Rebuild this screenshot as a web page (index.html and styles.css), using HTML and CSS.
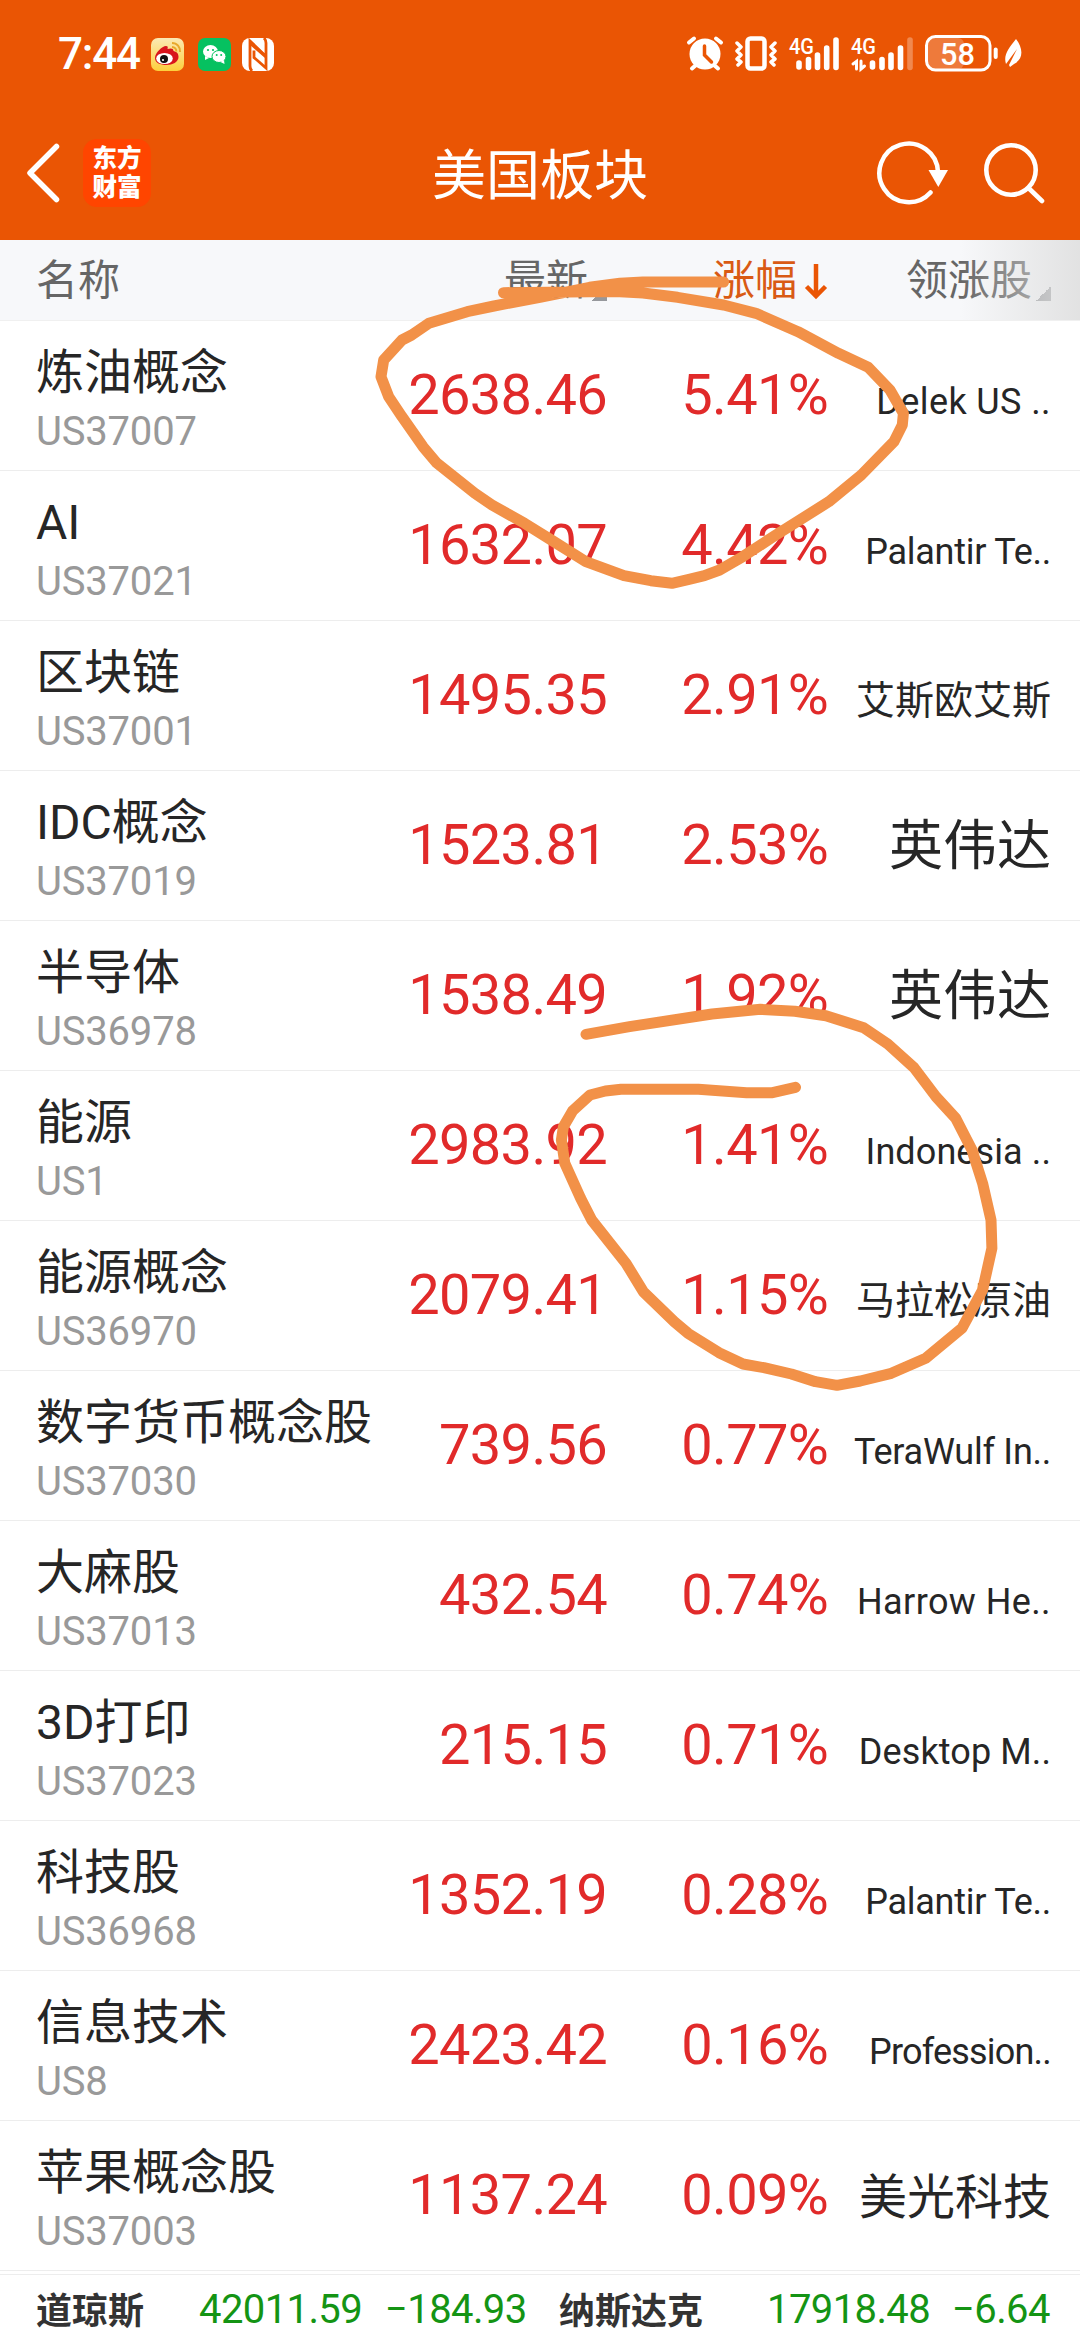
FILE: index.html
```
<!DOCTYPE html>
<html lang="zh-CN">
<head>
<meta charset="utf-8">
<title>美国板块</title>
<link rel="stylesheet" href="styles.css">
</head>
<body>
<div class="screen">
  <header class="top">
    <div class="status">
      <span class="clock">7:44</span>
      <svg class="ic-weibo" width="33" height="33" viewBox="0 0 33 33"><defs><linearGradient id="wb" x1="0" y1="0" x2="0" y2="1"><stop offset="0" stop-color="#fbe9b4"/><stop offset="1" stop-color="#fdcf3c"/></linearGradient></defs><rect width="33" height="33" rx="7" fill="url(#wb)"/><path d="M4 20c0-5 7-12 11-12 2 0 2 1 1.500 3 3-1 6-1 6 2 4 1 5 3 5 6 0 5-6 8-12 8S4 25 4 20z" fill="#d8141c"/><ellipse cx="13.500" cy="20.500" rx="8.300" ry="5.600" fill="#fff"/><circle cx="13" cy="21" r="4" fill="#111"/><circle cx="12" cy="22" r="1.100" fill="#fff"/><path d="M21 5c5 0 8.500 4 8 9M21 9c2.800 0 4.500 2 4.300 4.500" fill="none" stroke="#e8a82c" stroke-width="2"/></svg>
      <svg class="ic-wechat" width="33" height="33" viewBox="0 0 33 33"><rect width="33" height="33" rx="7" fill="#06c160"/><ellipse cx="12.500" cy="13.500" rx="7.500" ry="6.500" fill="#fff"/><path d="M7 18l0 4 4-2z" fill="#fff"/><ellipse cx="21" cy="18.500" rx="7" ry="6" fill="#fff" stroke="#06c160" stroke-width="1"/><path d="M26 22l0.500 4-4-2z" fill="#fff"/><g fill="#06c160"><circle cx="10" cy="12" r="1.100"/><circle cx="15" cy="12" r="1.100"/><circle cx="18.700" cy="17" r="1"/><circle cx="23.200" cy="17" r="1"/></g></svg>
      <svg class="ic-nfc" width="32" height="33" viewBox="0 0 32 33"><rect width="32" height="33" rx="8" fill="#fff"/><path d="M10 33Q8 31 8 28V3l14.500 14M22 0q2 2 2 5v25L12 19.500v-7" fill="none" stroke="#ea5504" stroke-width="2.800"/><path d="M8 2l15 14v4L8 7z" fill="#ea5504"/></svg>
      <svg class="ic-system" width="340" height="40" viewBox="684 34 340 40">
        <g fill="none" stroke="#fff" stroke-linecap="round">
          <circle cx="705" cy="54" r="15.500" fill="#fff" stroke="none"/>
          <path d="M689 42.500l5-4M721 42.500l-5-4M696 65l-4 3.500M714 65l4 3.500" stroke-width="4"/>
          <path d="M704.500 46v9l7 7" stroke="#ea5504" stroke-width="3.500"/>
          <rect x="747.500" y="38.500" width="17" height="30" rx="3" stroke-width="4.500"/>
          <path d="M737 43l4 4-4 4 4 4-4 4 4 3-3 3M775 43l-4 4 4 4-4 4 4 4-4 3 3 3" stroke-width="3.500" stroke-linejoin="round"/>
          <path d="M799 63v4M808.500 59.500V67.500M817.500 55V67.500M826.700 48V67.500M836 40V67.500M872.500 63v4M882 59.500V67.500M891 55V67.500M900.500 48V67.500" stroke-width="5.600"/>
          <path d="M910 40V67.500" stroke-width="5.600" opacity=".3"/>
          <path d="M853 64l3.500-2.500V69M861 61v8l3.500-3" stroke-width="3"/>
          <rect x="928" y="38" width="36" height="31" rx="6" fill="#fff" fill-opacity=".22" stroke="none"/>
          <rect x="926.500" y="36.500" width="63.500" height="33.500" rx="9" stroke-width="3"/>
          <path d="M995.700 49.500v7.500" stroke-width="4"/>
        </g>
        <path d="M1016 39c7 9 8 20-2 25l-4 3-1-2 8-16-11 15c-3-9 3-16 10-25z" fill="#fff"/>
        <g class="sys-text" fill="#fff"><text x="789" y="53.500" font-size="22" textLength="25" lengthAdjust="spacingAndGlyphs">4G</text><text x="851" y="53.500" font-size="22" textLength="25" lengthAdjust="spacingAndGlyphs">4G</text><text x="940" y="65" font-size="32" textLength="35" lengthAdjust="spacingAndGlyphs">58</text></g>
      </svg>
    </div>
    <div class="nav">
      <svg class="back" width="34" height="60" viewBox="0 0 34 60"><path d="M30.500 6L4 32.500 30.500 59" transform="translate(0 -2.500)" fill="none" stroke="#fff" stroke-width="5.500" stroke-linecap="round" stroke-linejoin="round"/></svg>
      <div class="logo"><span>东方</span><span>财富</span></div>
      <h1 class="title">美国板块</h1>
      <svg class="refresh" width="74" height="68" viewBox="875 138 74 68"><path d="M938 171A29.300 29.300 0 1 0 930.500 191.500" fill="none" stroke="#fff" stroke-width="4.500" stroke-linecap="round"/><path d="M928.500 169h19.500l-9.700 17z" fill="#fff"/></svg>
      <svg class="search" width="62" height="64" viewBox="983 140 62 64"><g fill="none" stroke="#fff" stroke-width="4.600" stroke-linecap="round"><circle cx="1011" cy="169" r="24.700"/><path d="M1029 187.500l13 12.500"/></g></svg>
    </div>
  </header>
  <div class="head">
    <span class="h-name">名称</span>
    <span class="h-cell">最新<i class="tri"></i></span>
    <span class="h-cell active">涨幅<svg class="arrow" width="24" height="38" viewBox="0 0 24 38"><path d="M12 2V34M2.500 24.500L12 34l9.500-9.500" fill="none" stroke="#ea5504" stroke-width="4.500"/></svg></span>
    <span class="h-cell">领涨股<i class="tri"></i></span>
  </div>
  <main class="list">
    <div class="row"><div class="name"><b>炼油概念</b><small>US37007</small></div><span class="num">2638.46</span><span class="num pct">5.41%</span><span class="lead wide">Delek US ..</span></div>
    <div class="row"><div class="name"><b>AI</b><small>US37021</small></div><span class="num">1632.07</span><span class="num pct">4.42%</span><span class="lead">Palantir Te..</span></div>
    <div class="row"><div class="name"><b>区块链</b><small>US37001</small></div><span class="num">1495.35</span><span class="num pct">2.91%</span><span class="lead zh5">艾斯欧艾斯</span></div>
    <div class="row"><div class="name"><b>IDC概念</b><small>US37019</small></div><span class="num">1523.81</span><span class="num pct">2.53%</span><span class="lead zh3">英伟达</span></div>
    <div class="row"><div class="name"><b>半导体</b><small>US36978</small></div><span class="num">1538.49</span><span class="num pct">1.92%</span><span class="lead zh3">英伟达</span></div>
    <div class="row"><div class="name"><b>能源</b><small>US1</small></div><span class="num">2983.92</span><span class="num pct">1.41%</span><span class="lead even">Indonesia ..</span></div>
    <div class="row"><div class="name"><b>能源概念</b><small>US36970</small></div><span class="num">2079.41</span><span class="num pct">1.15%</span><span class="lead zh5">马拉松原油</span></div>
    <div class="row"><div class="name"><b>数字货币概念股</b><small>US37030</small></div><span class="num">739.56</span><span class="num pct">0.77%</span><span class="lead">TeraWulf In..</span></div>
    <div class="row"><div class="name"><b>大麻股</b><small>US37013</small></div><span class="num">432.54</span><span class="num pct">0.74%</span><span class="lead wide">Harrow He..</span></div>
    <div class="row"><div class="name"><b>3D打印</b><small>US37023</small></div><span class="num">215.15</span><span class="num pct">0.71%</span><span class="lead even">Desktop M..</span></div>
    <div class="row"><div class="name"><b>科技股</b><small>US36968</small></div><span class="num">1352.19</span><span class="num pct">0.28%</span><span class="lead">Palantir Te..</span></div>
    <div class="row"><div class="name"><b>信息技术</b><small>US8</small></div><span class="num">2423.42</span><span class="num pct">0.16%</span><span class="lead tight">Profession..</span></div>
    <div class="row"><div class="name"><b>苹果概念股</b><small>US37003</small></div><span class="num">1137.24</span><span class="num pct">0.09%</span><span class="lead zh4">美光科技</span></div>
  </main>
  <footer class="ticker">
    <b class="t-name">道琼斯</b><span class="t-val">42011.59</span><span class="t-chg">−184.93</span>
    <b class="t-name second">纳斯达克</b><span class="t-val">17918.48</span><span class="t-chg">−6.64</span>
  </footer>
  <svg class="ink" width="1080" height="2340" viewBox="0 0 1080 2340">
    <polyline points="503.500,292.700 589.600,291.700 620,291.700 643,293 677.600,297.300 723.600,305 756,313.300 798,331.700 838.400,353.300 868.200,367.300 890,390 903.400,413.300 902.300,425 893.900,441.700 861.300,475 828.800,501.700 773.300,536.700 742.700,556.700 719.700,570 704.400,575.700 689,579.300 671.900,583.300 650.800,580.700 624,575.700 585.800,561.700 551.300,540 524.600,523.300 492,505 474.800,493.300 436.500,462.700 423,446.700 402,416.700 388.700,396.700 381,376.700 383.700,360 402,340 411.700,335 428.900,323.300 467.200,311.700 494,306 539.900,297.300 589.600,287.300 620,283.300 643,282 723.600,282"/>
    <polyline points="586,1034.300 629.500,1026.700 712,1014 760.400,1009.300 794.900,1011.300 825.900,1015.700 863.700,1027.700 887.800,1044 913.700,1067.300 936,1096.700 955.700,1118.300 972,1150 982.600,1183.300 991,1220 991.900,1248.300 982.600,1290 961.900,1328.300 925.700,1358.300 891.300,1373.300 860.300,1381 837,1385.300 815.500,1381.700 791.400,1374 763.900,1367.700 743,1364 719,1352.700 688,1333.300 674.300,1321.700 643.300,1291.700 626,1263.300 591.700,1220 580.600,1198.300 564.800,1163.300 561.400,1140 563.400,1126.700 572.700,1110.700 590,1095 605.400,1091 621,1089.300 698.400,1089.300 746.600,1092.700 772.500,1092.700 795.500,1087.300"/>
  </svg>
</div>
</body>
</html>
```
FILE: styles.css
```
* { box-sizing: border-box; }
body { margin: 0; background: #fff; font-family: Roboto, "Noto Sans CJK SC", sans-serif; color: #262626; }
.screen { position: relative; width: 1080px; height: 2340px; overflow: hidden; display: flex; flex-direction: column; }
.screen svg { display: block; flex: none; }

.top { height: 240px; background: #ea5504; color: #fff; }
.status { height: 106px; display: flex; align-items: center; padding: 2px 0 0 58px; }
.clock { width: 93px; font: 500 44px/1 Roboto, sans-serif; letter-spacing: -1.2px; }
.ic-wechat { margin-left: 14px; }
.ic-nfc { margin-left: 11px; }
.screen .ic-system { margin-left: 410px; overflow: visible; }
.sys-text { font-family: Roboto, sans-serif; font-weight: 500; }

.nav { height: 134px; display: flex; align-items: center; padding-left: 26px; }
.logo { width: 68px; height: 68px; margin-left: 23px; border-radius: 14px; background: #ff4500; display: flex; flex-direction: column; align-items: center; justify-content: center; padding-bottom: 4px; font: 900 24.5px/29px "Noto Sans CJK SC", sans-serif; }
.title { flex: none; width: 216px; margin: -2px 0 0 281px; font: 400 54px/80px "Noto Sans CJK SC", sans-serif; white-space: nowrap; }
.refresh { margin-left: 227px; }
.search { margin-left: 34px; }

.head, .row { display: grid; grid-template-columns: 370px 237px 221px 223px; }
.head { position: relative; height: 81px; background: #f7f8fa; border-bottom: 1px solid #f0f0f0; color: #666; font: 400 42px/74px "Noto Sans CJK SC", sans-serif; }
.head::after { content: ""; position: absolute; top: 0; right: 0; width: 120px; height: 80px; background: linear-gradient(90deg, rgba(222,222,222,0), rgba(222,222,222,.85)); }
.h-name { padding-left: 36px; }
.h-cell { display: flex; justify-content: flex-end; }
.active { color: #d95a14; }
.tri { width: 15px; height: 15px; margin: 46px 0 0 4px; background: linear-gradient(135deg, transparent 50%, #96989c 50%); }
.arrow { margin: 22px 0 0 7px; }

.list { flex: none; }
.row { height: 150px; border-bottom: 1px solid #ededed; }
.name { padding-left: 36px; display: flex; flex-direction: column; white-space: nowrap; }
.name b { font: 400 48px/60px Roboto, "Noto Sans CJK SC", sans-serif; margin-top: 22px; }
.name small { font-size: 40px; line-height: 48px; color: #999; margin-top: 5px; letter-spacing: -.2px; }
.num, .lead { text-align: right; white-space: nowrap; }
.num { font-size: 56px; line-height: 70px; letter-spacing: -.7px; color: #e12a2a; padding-top: 39px; }
.lead { font-size: 36px; line-height: 70px; padding-top: 46px; letter-spacing: -.25px; }
.wide { letter-spacing: .4px; }
.even { letter-spacing: .1px; }
.tight { letter-spacing: -.8px; }
.zh5 { font-size: 39px; padding-top: 45px; letter-spacing: 0; }
.zh4 { font-size: 48px; padding-top: 42px; letter-spacing: 0; }
.zh3 { font-size: 54px; padding-top: 41px; letter-spacing: 0; }

.ticker { margin-top: 3px; height: 66px; border-top: 1px solid #ededed; display: grid; grid-template-columns: 163px 186px 174px 208px 185px 1fr; align-items: center; padding: 3px 0 0 36px; font-size: 40px; letter-spacing: -.6px; color: #149414; white-space: nowrap; }
.t-name { font: 700 36px/50px "Noto Sans CJK SC", sans-serif; letter-spacing: 0; color: #333; margin-top: -3px; }
.ink { position: absolute; left: 0; top: 0; }
.ink polyline { fill: none; stroke: #f29148; stroke-width: 11; stroke-linecap: round; stroke-linejoin: round; }
```
